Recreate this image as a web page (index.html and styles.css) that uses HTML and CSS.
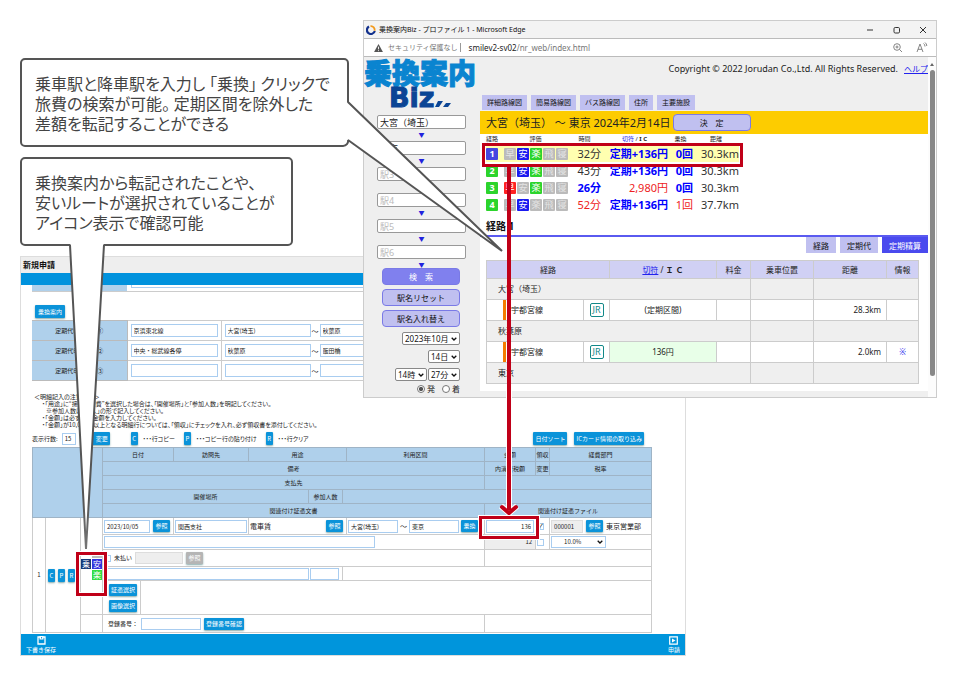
FILE: index.html
```html
<!DOCTYPE html>
<html lang="ja">
<head>
<meta charset="utf-8">
<title>乗換案内Biz 連携</title>
<link rel="stylesheet" href="styles.css">
</head>
<body>
<main class="canvas">

<section class="form-window">
  <h1 class="form-title">新規申請</h1>
  <div class="form-bar"></div>
  <div class="form-body">
    <div class="cut-row"><span class="cut-label"></span><span class="cut-field"></span></div>
    <button class="btn route-btn" type="button">乗換案内</button>
    <table class="pass-table">
      <colgroup><col class="p-label"><col class="p-line"><col></colgroup>
      <tr><th scope="row">定期代申請区間①</th><td><input aria-label="路線①" value="京浜東北線"></td>
        <td><div class="span-row"><input aria-label="乗車駅①" value="大宮(埼玉)"><span>～</span><input aria-label="降車駅①" value="秋葉原"></div></td></tr>
      <tr><th scope="row">定期代申請区間②</th><td><input aria-label="路線②" value="中央・総武線各停"></td>
        <td><div class="span-row"><input aria-label="乗車駅②" value="秋葉原"><span>～</span><input aria-label="降車駅②" value="飯田橋"></div></td></tr>
      <tr><th scope="row">定期代申請区間③</th><td><input aria-label="路線③"></td>
        <td><div class="span-row"><input aria-label="乗車駅③"><span>～</span><input aria-label="降車駅③"></div></td></tr>
    </table>

    <div class="notes">
      <p>＜明細記入の注意事項＞</p>
      <p class="in1">・「用途」に“接待交際費”を選択した場合は、「開催場所」と「参加人数」を明記してください。</p>
      <p class="in2">※参加人数は「○人」の形で記入してください。</p>
      <p class="in1">・「金額」は必ず税込金額を入力してください。</p>
      <p class="in1">・「金額」が10,000円以上となる明細行については、「領収」にチェックを入れ、必ず領収書を添付してください。</p>
    </div>

    <div class="tools">
      <label for="rows">表示行数:</label><input id="rows" class="rows" value="15">
      <button class="btn change" type="button">変更</button>
      <span class="legend"><button class="btn key" type="button">C</button>・・・行コピー</span>
      <span class="legend"><button class="btn key" type="button">P</button>・・・コピー行の貼り付け</span>
      <span class="legend"><button class="btn key" type="button">R</button>・・・行クリア</span>
      <span class="tools-right">
        <button class="btn" type="button">日付ソート</button>
        <button class="btn" type="button">ICカード情報の取り込み</button>
      </span>
    </div>

    <table class="detail">
      <colgroup><col class="w13"><col class="w35"><col class="w22"><col class="w38"><col class="w33"><col class="w75"><col class="w60"><col class="w34"><col class="w4"><col class="w138"><col class="w51"><col class="w14"><col></colgroup>
      <thead>
        <tr><th colspan="3" rowspan="5"></th><th colspan="2">日付</th><th>訪問先</th><th colspan="3">用途</th><th>利用区間</th><th>金額</th><th>領収</th><th>経費部門</th></tr>
        <tr><th colspan="7">備考</th><th>内消費税額</th><th>変更</th><th>税率</th></tr>
        <tr><th colspan="7">支払先</th><th colspan="3"></th></tr>
        <tr><th colspan="4">開催場所</th><th>参加人数</th><th colspan="5"></th></tr>
        <tr><th colspan="7">関連付け証憑文書</th><th colspan="3">関連付け証憑ファイル</th></tr>
      </thead>
      <tbody>
        <tr class="r17">
          <td rowspan="6" class="num">1</td>
          <td rowspan="6"><div class="keys"><button class="btn key" type="button">C</button><button class="btn key" type="button">P</button><button class="btn key" type="button">R</button></div></td>
          <td rowspan="5"><div class="marks"><span class="mark m-off"></span><span class="mark m-nori">乗</span><span class="mark m-an">安</span><span class="mark m-raku">楽</span></div></td>
          <td colspan="2"><div class="cell"><input class="grow" aria-label="日付" value="2023/10/05"><button class="btn ref" type="button">参照</button></div></td>
          <td><div class="cell full"><input class="grow" aria-label="訪問先" value="関西支社"></div></td>
          <td colspan="3"><div class="cell"><span class="grow">電車賃</span><button class="btn ref" type="button">参照</button></div></td>
          <td><div class="cell trip"><input class="grow" aria-label="乗車駅" value="大宮(埼玉)"><span>～</span><input class="grow" aria-label="降車駅" value="東京"><button class="btn ref" type="button">乗換</button></div></td>
          <td><div class="cell full"><input class="grow right" aria-label="金額" value="136"></div></td>
          <td><div class="cell"><input type="checkbox" aria-label="領収" checked></div></td>
          <td><div class="cell"><input class="code gray" aria-label="経費部門コード" value="000001"><button class="btn ref" type="button">参照</button><span>東京営業部</span></div></td>
        </tr>
        <tr class="r15">
          <td colspan="7"><div class="cell"><input class="note" aria-label="備考"></div></td>
          <td class="tax">12</td>
          <td><div class="cell"><input type="checkbox" aria-label="変更"></div></td>
          <td><div class="cell"><select class="rate" aria-label="税率"><option>10.0%</option></select></div></td>
        </tr>
        <tr class="r17">
          <td colspan="7"><div class="cell pay"><input type="checkbox" id="unpaid"><label for="unpaid">未払い</label><input class="payee gray" aria-label="支払先"><button class="btn ref off" type="button" disabled>参照</button></div></td>
          <td colspan="3"></td>
        </tr>
        <tr class="r14">
          <td colspan="5"><div class="cell"><input class="place" aria-label="開催場所"><input class="people" aria-label="参加人数"></div></td>
          <td colspan="5"></td>
        </tr>
        <tr class="r34">
          <td><div class="stack"><button class="btn" type="button">証憑選択</button><button class="btn" type="button">画像選択</button></div></td>
          <td colspan="9"></td>
        </tr>
        <tr class="r18">
          <td></td>
          <td colspan="7"><div class="cell reg"><label for="reg">登録番号：</label><input id="reg" class="regno"><button class="btn" type="button">登録番号確認</button></div></td>
          <td colspan="3"></td>
        </tr>
      </tbody>
    </table>
  </div>
  <footer class="form-foot">
    <button type="button"><svg viewBox="0 0 9 9"><path d="M1 1h7v7H1z" fill="none" stroke="#fff" stroke-width="1.3"/><path d="M2.5 0h4v3.5h-4z" fill="#fff"/><path d="M4.6 1v1.5" stroke="#0092dd"/></svg>下書き保存</button>
    <button type="button"><svg viewBox="0 0 9 9"><path d="M.7 .9h7.6v7.2H.7z" fill="none" stroke="#fff" stroke-width="1.2"/><path d="M3 2.5l3.5 2L3 6.500z" fill="#fff"/></svg>申請</button>
  </footer>
</section>

<section class="browser">
  <header class="titlebar">
    <svg class="favicon" viewBox="0 0 10 10"><path d="M3 1.500A4 4 0 1 0 8.800 6 " fill="none" stroke="#12308c" stroke-width="2.200"/><path d="M4.500 1.200A3.800 3.800 0 0 1 8.600 5.800" fill="none" stroke="#f39a1d" stroke-width="1.800"/></svg>
    <span>乗換案内Biz - プロファイル 1 - Microsoft Edge</span>
    <svg class="winctl" viewBox="0 0 62 10"><path d="M1 5h6M54 2l6 6M60 2l-6 6" stroke="#333" fill="none"/><rect x="28" y="2.500" width="5.500" height="5.500" rx="1.200" fill="none" stroke="#333"/></svg>
  </header>
  <div class="address">
    <svg class="warn" viewBox="0 0 10 9"><path d="M5 0l5 9H0z" fill="#555"/><path d="M5 3v3M5 7v1" stroke="#fff"/></svg>
    <span class="insecure">セキュリティ保護なし</span><span class="sep"></span><span class="url"><b>smilev2-sv02</b>/nr_web/index.html</span>
    <svg class="addrctl" viewBox="0 0 36 12"><circle cx="5" cy="5" r="3.300" fill="none" stroke="#777" stroke-width=".9"/><path d="M3.500 5h3M5 3.500v3M7.500 7.500l2.500 2.500M25 10l3-8 3 8M26 7.300h4M31.500 1.500q1.500 1 1.500 3M33 .5q1.800 1.200 1.800 3.500" fill="none" stroke="#777" stroke-width=".9"/></svg>
  </div>
  <div class="page">
    <aside class="side">
      <div class="logo"><span class="logo-ja">乗換案内</span><span class="logo-biz">Biz<svg viewBox="0 0 16 8"><path d="M3 2h5L4 8H0zM11 4h5l-3 4H8z" fill="#0b4595"/></svg></span></div>
      <div class="stations">
        <input aria-label="駅1" value="大宮（埼玉）"><i>▼</i>
        <input aria-label="駅2" value="東京"><i>▼</i>
        <input aria-label="駅3" placeholder="駅3"><i>▼</i>
        <input aria-label="駅4" placeholder="駅4"><i>▼</i>
        <input aria-label="駅5" placeholder="駅5"><i>▼</i>
        <input aria-label="駅6" placeholder="駅6"><i>▼</i>
      </div>
      <div class="actions">
        <button class="pill main" type="button">検　索</button>
        <button class="pill" type="button">駅名リセット</button>
        <button class="pill" type="button">駅名入れ替え</button>
      </div>
      <div class="when">
        <div><select aria-label="年月"><option>2023年10月</option></select></div>
        <div><select aria-label="日"><option>14日</option></select></div>
        <div><select aria-label="時"><option>14時</option></select><select aria-label="分"><option>27分</option></select></div>
        <div class="radios"><label><input type="radio" name="da" checked>発</label><label><input type="radio" name="da">着</label></div>
      </div>
    </aside>
    <div class="content">
      <div class="top"><span>Copyright © 2022 Jorudan Co.,Ltd. All Rights Reserved.</span><a href="#">ヘルプ</a></div>
      <nav class="tabs"><button type="button">詳細路線図</button><button type="button">簡易路線図</button><button type="button">バス路線図</button><button type="button">住所</button><button type="button">主要施設</button></nav>
      <div class="sheet">
        <div class="query"><span>大宮（埼玉） ～ 東京 2024年2月14日</span><button class="pill" type="button">決　定</button></div>
        <table class="results">
          <colgroup><col class="c-no"><col class="c-mark"><col class="c-time"><col class="c-fare"><col class="c-chg"><col class="c-km"></colgroup>
          <thead><tr><th class="left">経路</th><th>評価</th><th>時間</th><th><span class="blue">切符</span> / <b>I C</b></th><th>乗換</th><th>距離</th></tr></thead>
          <tbody>
            <tr class="hit"><td><span class="no sel">1</span></td><td><div class="tags"><i>早</i><i class="b">安</i><i class="g">楽</i><i>飛</i><i>寝</i></div></td><td>32分</td><td class="best">定期+136円</td><td class="best">0回</td><td>30.3km</td></tr>
            <tr><td><span class="no">2</span></td><td><div class="tags"><i>早</i><i class="b">安</i><i class="g">楽</i><i>飛</i><i>寝</i></div></td><td>43分</td><td class="best">定期+136円</td><td class="best">0回</td><td>30.3km</td></tr>
            <tr><td><span class="no">3</span></td><td><div class="tags"><i class="r">早</i><i>安</i><i class="g">楽</i><i>飛</i><i>寝</i></div></td><td class="best">26分</td><td class="bad">2,980円</td><td class="best">0回</td><td>30.3km</td></tr>
            <tr><td><span class="no">4</span></td><td><div class="tags"><i>早</i><i class="b">安</i><i>楽</i><i>飛</i><i>寝</i></div></td><td class="bad">52分</td><td class="best">定期+136円</td><td class="bad">1回</td><td>37.7km</td></tr>
          </tbody>
        </table>
        <h2>経路 1</h2>
        <div class="subtabs"><button type="button">経路</button><button type="button">定期代</button><button class="on" type="button">定期精算</button></div>
        <table class="route">
          <colgroup><col class="q97"><col class="q26"><col class="q107"><col class="q34"><col class="q63"><col class="q73"><col></colgroup>
          <thead><tr><th colspan="2">経路</th><th><a href="#">切符</a> / <b>Ｉ Ｃ</b></th><th>料金</th><th>乗車位置</th><th>距離</th><th>情報</th></tr></thead>
          <tbody>
            <tr class="st"><td colspan="4">大宮（埼玉）</td><td></td><td colspan="2"></td></tr>
            <tr><td class="line"><span>宇都宮線</span></td><td class="mid"><span class="jr">JR</span></td><td class="mid">(定期区間)</td><td></td><td></td><td class="km">28.3km</td><td></td></tr>
            <tr class="st"><td colspan="4">秋葉原</td><td></td><td colspan="2"></td></tr>
            <tr><td class="line"><span>宇都宮線</span></td><td class="mid"><span class="jr">JR</span></td><td class="mid green">136円</td><td></td><td></td><td class="km">2.0km</td><td class="mid info">※</td></tr>
            <tr class="st"><td colspan="4">東京</td><td></td><td colspan="2"></td></tr>
          </tbody>
        </table>
      </div>
    </div>
    <div class="scroll"><i></i><span></span></div>
  </div>
</section>

<svg class="overlay" viewBox="0 0 958 676">
  <defs><linearGradient id="tip" gradientUnits="userSpaceOnUse" x1="0" y1="500" x2="0" y2="550"><stop offset="0" stop-color="#555"/><stop offset="1" stop-color="#777"/></linearGradient></defs>
  <g fill="none" stroke="#fff" stroke-width="6"><path d="M509 390V508"/><path d="M501 506l8 7 8-7"/></g>
  <path d="M25 59H344a4 4 0 0 1 4 4V102L502 251 348 140a5 5 0 0 1-5 6H25a4 4 0 0 1-4-4V63a4 4 0 0 1 4-4z" fill="#fff" stroke="#555" stroke-width="2" stroke-linejoin="bevel"/>
  <path d="M25 158H288a4 4 0 0 1 4 4V241a4 4 0 0 1-4 4H104L86 549 70 245H25a4 4 0 0 1-4-4V162a4 4 0 0 1 4-4z" fill="#fff" stroke="url(#tip)" stroke-width="2" stroke-linejoin="bevel"/>
  <g fill="none" stroke="#c00018">
    <path d="M509 165V510" stroke-width="4"/>
    <path d="M502 507l7 6 7-6" stroke-width="4" stroke-linecap="round"/>
    <g stroke="#fff" stroke-width="5"><path d="M480.500 517.500h57v20h-57z"/><path d="M77.500 553.500h28v41h-28z"/></g>
    <g stroke-width="3"><path d="M483.500 144.500h258v21h-258z"/><path d="M480.500 517.500h57v20h-57z"/><path d="M77.500 553.500h28v41h-28z"/></g>
  </g>
</svg>
<p class="callout c1">乗車駅と降車駅を入力し 「乗換」 クリックで<br>旅費の検索が可能。 定期区間を除外した<br>差額を転記することができる</p>
<p class="callout c2">乗換案内から転記されたことや、<br>安いルートが選択されていることが<br>アイコン表示で確認可能</p>
</main>
</body>
</html>
```
FILE: styles.css
```css
* { box-sizing: border-box; }
body { margin: 0; background: #fff; color: #222; font-family: "Noto Sans", "Noto Sans CJK JP", sans-serif; }
p, h1, h2 { margin: 0; }
button, input, select { font: inherit; color: inherit; margin: 0; padding: 0; border-radius: 0; appearance: none; }
button { border: 0; white-space: nowrap; }
input { min-width: 0; }
i { font-style: normal; }
table { border-collapse: collapse; border-spacing: 0; table-layout: fixed; }
th, td { padding: 0; font-weight: 400; }
.canvas { position: relative; min-height: 676px; overflow: hidden; }

/* expense form window */
.form-window {
  position: absolute; left: 20px; top: 256px; width: 666px; height: 400px;
  display: flex; flex-direction: column; overflow: hidden;
  border: 1px solid #ddd; background: #fff;
  font-family: "Noto Sans CJK JP", sans-serif; font-size: 6px; line-height: 8px;
}
.form-title { flex: none; background: #eee; font-size: 8px; line-height: 16px; padding-left: 2px; color: #111; }
.form-bar { flex: none; height: 12px; background: #0092dd; }
.form-body { flex: 1; min-height: 0; overflow: hidden; padding: 0 33px 0 11px; }
.cut-row { display: flex; height: 7px; border-bottom: 1px solid #ccc; }
.cut-label { width: 95px; background: #afd0eb; }
.cut-field { flex: 1; margin-left: 4px; height: 3px; border: 1px solid #a9cdf0; border-top: 0; }
.btn { background: #0b93d9; color: #fff; height: 13px; line-height: 11px; padding: 0 2px; border-radius: 1px; box-shadow: 0 1px 2px #8aa; }
.btn.off { background: #b5b5b5; }
.route-btn { display: block; margin: 13px 0 2px 3px; width: 30px; }
.pass-table { width: 100%; }
.pass-table .p-label { width: 95px; }
.pass-table .p-line { width: 94px; }
.pass-table tr { height: 20px; }
.pass-table th { background: #afd0eb; border: 1px solid #bbb; border-left: 0; }
.pass-table td { border: 1px solid #ccc; padding: 0 3px; }
.form-window input { height: 13px; width: 100%; border: 1px solid #a9cdf0; padding: 0 2px; background: #fff; }
.span-row { display: flex; align-items: center; gap: 1px; }
.pass-table .span-row input { width: 86px; }
.span-row span, .cell > span { font-size: 7px; }
.notes { margin: 12px 0 2px 2px; line-height: 7px; font-feature-settings: "palt"; }
.notes .in1 { padding-left: 8px; }
.notes .in2 { padding-left: 12px; }
.tools { display: flex; align-items: center; height: 17px; white-space: nowrap; }
.form-window .tools .rows { width: 14px; height: 12px; margin: 0 4px; }
.tools .change { width: 30px; text-align: right; margin-right: 21px; }
.btn.key { width: 7px; padding: 0; text-align: center; }
.legend { display: flex; align-items: center; gap: 5px; margin-right: 9px; font-feature-settings: "palt"; }
.tools-right { margin-left: auto; display: flex; gap: 7px; margin-right: 8px; }
.detail { width: 100%; }
.detail .w13 { width: 13px; } .detail .w35 { width: 35px; } .detail .w22 { width: 22px; }
.detail .w38 { width: 38px; } .detail .w33 { width: 33px; } .detail .w75 { width: 75px; }
.detail .w60 { width: 60px; } .detail .w34 { width: 34px; } .detail .w4 { width: 4px; }
.detail .w138 { width: 138px; } .detail .w51 { width: 51px; } .detail .w14 { width: 14px; }
.detail th { height: 14px; background: #afd0eb; border: 1px solid #9fb4c6; white-space: nowrap; }
.detail td { border: 1px solid #ccc; vertical-align: middle; white-space: nowrap; }
.r14 { height: 14px; } .r15 { height: 15px; } .r17 { height: 17px; } .r18 { height: 18px; } .r34 { height: 34px; }
.num { text-align: center; }
.keys { display: flex; gap: 3px; padding-left: 2px; }
.marks { display: grid; grid-template-columns: 10px 10px; grid-template-rows: 5px 10px 10px; justify-content: end; gap: 1px; }
.mark { color: #fff; font-size: 8px; line-height: 10px; text-align: center; }
.m-off { grid-area: 1 / 2; background: #bbb; }
.m-nori { grid-area: 2 / 1; background: #163a78; }
.m-an { grid-area: 2 / 2; background: #33d; }
.m-raku { grid-area: 3 / 2; background: #3d4; }
.cell { display: flex; align-items: center; gap: 3px; padding: 0 3px 0 1px; }
.cell.full { padding-right: 1px; }
.cell.trip { gap: 2px; padding-right: 6px; }
.cell .grow { flex: 1; width: 0; }
.cell .ref { width: 17px; height: 12px; line-height: 10px; flex: none; }
.cell .right { text-align: right; }
.form-window .gray { background: #eee; border-color: #ddd; }
.form-window input.code { width: 32px; }
.form-window input.note { width: 271px; }
.form-window input.payee { width: 48px; height: 12px; }
.form-window input.place { width: 205px; height: 12px; }
.form-window input.people { width: 29px; height: 12px; margin-left: -2px; }
.form-window input.regno { width: 60px; height: 12px; }
.form-window .cell input[type=checkbox] { width: 7px; height: 7px; flex: none; padding: 0; border: 1px solid #a9cdf0; }
.form-window .cell input[type=checkbox]:checked::before { content: "✓"; display: block; font-size: 7px; line-height: 5px; }
.r15 input { height: 12px; }
.tax { background: #eee; text-align: right; padding-right: 3px; }
.rate { width: 55px; height: 12px; border: 1px solid #a9cdf0; padding: 0 12px; }
.stack { display: flex; flex-direction: column; align-items: flex-end; gap: 4px; padding-right: 3px; }
.stack .btn, .reg .btn { height: 12px; line-height: 10px; }
.reg { padding-left: 5px; }
.form-foot { flex: none; height: 21px; background: #0095dc; display: flex; justify-content: space-between; padding: 0 5px; }
.form-foot button { background: none; color: #fff; display: flex; flex-direction: column; align-items: center; gap: 1px; padding-top: 2px; }
.form-foot svg { width: 9px; height: 9px; }

select {
  background: #fff url("data:image/svg+xml,%3Csvg xmlns='http://www.w3.org/2000/svg' viewBox='0 0 6 4'%3E%3Cpath d='M.7.7L3 3 5.3.7' fill='none' stroke='%23111' stroke-width='1.300'/%3E%3C/svg%3E") no-repeat right 2px center / 6px 4px;
}

/* browser window */
.browser {
  position: absolute; left: 363px; top: 20px; width: 574px; height: 378px;
  display: flex; flex-direction: column; overflow: hidden;
  border: 1px solid #ccc; background: #efefef; font-size: 8px; line-height: 12px;
}
.titlebar { flex: none; height: 18px; display: flex; align-items: center; padding: 0 8px 0 2px; gap: 3px; background: #f3f3f3; border-bottom: 1px solid #bbb; font-size: 7px; color: #111; }
.favicon { width: 10px; height: 10px; }
.winctl { width: 62px; height: 10px; margin-left: auto; }
.address { flex: none; height: 18px; display: flex; align-items: center; padding: 0 8px 0 10px; background: #fff; border-bottom: 1px solid #bbb; font-size: 8px; color: #777; }
.warn { width: 9px; height: 8px; margin-right: 5px; }
.insecure { font-size: 7px; }
.sep { width: 1px; height: 9px; background: #999; margin: 0 8px 0 2px; }
.url b { color: #222; font-weight: 400; }
.addrctl { width: 36px; height: 12px; margin-left: auto; }
.page { flex: 1; min-height: 0; display: flex; }
.side { width: 116px; flex: none; }
.logo { height: 58px; display: flex; flex-direction: column; }
.logo-ja { font: 900 28px/30px "Noto Sans CJK JP", sans-serif; color: #0a84d0; white-space: nowrap; -webkit-text-stroke: 1px #0a84d0; }
.logo-biz { display: flex; align-items: baseline; font: 700 27px/22px "DejaVu Sans", sans-serif; color: #0b4595; padding-left: 25px; -webkit-text-stroke: 1px #0b4595; }
.logo-biz svg { width: 16px; height: 8px; }
.stations { display: flex; flex-direction: column; padding: 0 14px 0 13px; }
.stations input { height: 14px; border: 1px solid #999; border-radius: 2px; background: #fff; padding: 0 2px; font-size: 9px; }
.stations input::placeholder { color: #bbb; opacity: 1; }
.stations i { height: 12px; font-size: 6px; line-height: 12px; text-align: center; color: #22d; }
.actions { display: flex; flex-direction: column; gap: 4px; width: 78px; margin: -3px 0 5px 18px; }
.pill { height: 17px; border: 1px solid #7a7ae6; border-radius: 4px; background: #c0c0f0; font-size: 8px; line-height: 15px; color: #111; }
.pill.main { background: #8080ee; color: #fff; }
.when { display: flex; flex-direction: column; gap: 5px; width: 96px; }
.when div { display: flex; justify-content: flex-end; gap: 1px; }
.when select { height: 13px; border: 1px solid #888; border-radius: 2px; padding: 0 10px 0 2px; font-size: 8px; line-height: 11px; color: #111; }
.when .radios { gap: 7px; margin-top: -3px; }
.radios label { display: flex; align-items: center; gap: 2px; }
.radios input { width: 8px; height: 8px; border: 1px solid #777; border-radius: 50%; background: #fff; }
.radios input:checked { background: radial-gradient(#555 45%, #fff 55%); }
.content { flex: 1; min-width: 0; }
.top { display: flex; justify-content: flex-end; gap: 6px; padding-top: 6px; height: 38px; font-size: 9px; }
.top a { color: #22e; font-size: 8px; }
.tabs { display: flex; gap: 4px; padding: 0 0 1px 2px; }
.tabs button { height: 15px; padding: 0 5px; background: #c0c0f0; font: 400 7px/15px "Noto Sans CJK JP", sans-serif; color: #111; }
.sheet { background: #fff; height: 280px; overflow: hidden; }
.query { display: flex; align-items: center; gap: 2px; height: 23px; padding-left: 6px; background: #fdcc00; font-size: 11px; color: #222; white-space: nowrap; }
.query .pill { width: 78px; }
.results { width: 253px; margin-left: 6px; font-size: 11px; line-height: 16px; }
.c-no { width: 17px; } .c-mark { width: 65px; } .c-time { width: 33px; } .c-fare { width: 67px; } .c-chg { width: 25px; }
.results th { height: 11px; font-size: 6px; line-height: 11px; color: #222; white-space: nowrap; }
.results .left { text-align: left; }
.results td { height: 17px; text-align: right; white-space: nowrap; color: #333; }
.results .blue { color: #22e; }
.results .hit { background: #ffffb0; }
.results .best { color: #00f; font-weight: 700; }
.results .bad { color: #e22; }
.no { display: block; width: 12px; height: 12px; border-radius: 1px; background: #2cd42c; color: #fff; font-size: 9px; font-weight: 700; line-height: 12px; text-align: center; }
.no.sel { background: #4646e0; }
.tags { display: flex; gap: 1px; padding-left: 1px; }
.tags i { width: 12px; height: 12px; border-radius: 1px; background: #bbb; color: #e4e4e4; font: 9px/11px "Noto Sans CJK JP", sans-serif; text-align: center; }
.tags .b { background: #1a1af0; color: #fff; } .tags .g { background: #2cd42c; color: #fff; } .tags .r { background: #f22; color: #fff; }
.sheet h2 { margin-top: 4px; padding-left: 6px; height: 20px; border-bottom: 2px solid #5a5af0; font-size: 10px; line-height: 18px; color: #111; }
.subtabs { display: flex; justify-content: flex-end; gap: 4px; margin-bottom: 7px; }
.subtabs button { height: 16px; padding: 0 7px; background: #c0c0f0; font-size: 8px; line-height: 15px; color: #111; }
.subtabs .on { background: #4a4aee; color: #fff; }
.route { width: calc(100% - 15px); margin-left: 6px; font-size: 8px; line-height: 12px; }
.q97 { width: 97px; } .q26 { width: 26px; } .q107 { width: 107px; } .q34 { width: 34px; } .q63 { width: 63px; } .q73 { width: 73px; }
.route th, .route td { border: 1px solid #ccc; }
.route th { height: 18px; background: #d0d0f4; }
.route a { color: #22e; }
.route td { height: 21px; }
.route .st td { background: #efefef; padding-left: 11px; }
.route .line { padding-left: 16px; }
.line span { display: block; border-left: 3px solid #f57c00; padding-left: 5px; line-height: 20px; }
.route .mid { text-align: center; }
.route .green { background: #e8ffe8; }
.route .km { text-align: right; padding-right: 5px; }
.route .info { color: #22e; }
.jr { display: block; width: 14px; height: 14px; margin: 0 auto; border: 1px solid #188; border-radius: 2px; color: #188; font-size: 9px; line-height: 12px; }
.scroll { width: 8px; flex: none; background: #fcfcfc; display: flex; flex-direction: column; align-items: center; }
.scroll i { margin-top: 6px; border: 2px solid transparent; border-bottom: 3px solid #666; border-top: 0; }
.scroll span { width: 5px; margin-top: 4px; height: 306px; border-radius: 3px; background: #888; }

/* annotations */
.overlay { position: absolute; left: 0; top: 0; width: 958px; height: 676px; }
.callout { position: absolute; left: 35px; font: 16px/20px "Noto Sans CJK JP", sans-serif; font-feature-settings: "palt"; color: #444; white-space: nowrap; }
.c1 { top: 73px; }
.c2 { top: 172px; }
```
